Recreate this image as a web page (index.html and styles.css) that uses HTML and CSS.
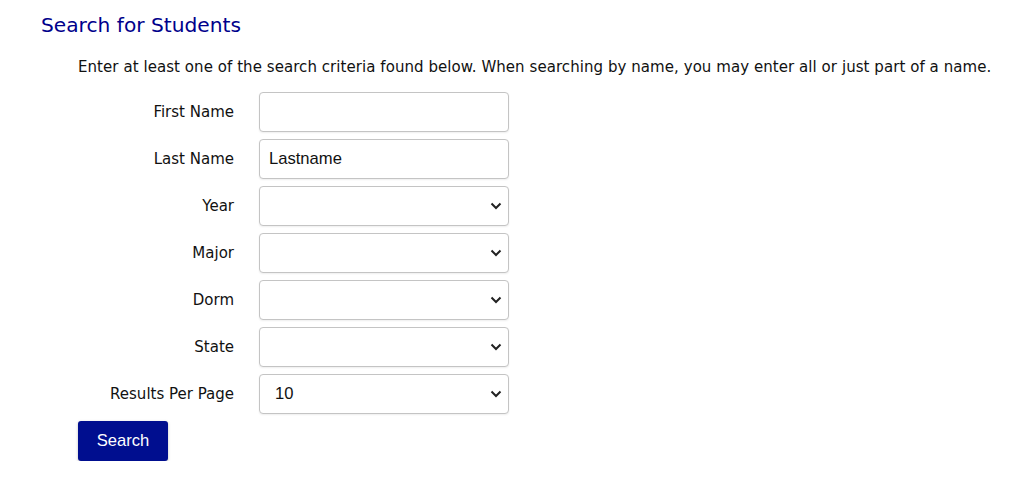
FILE: index.html
```html
<!DOCTYPE html>
<html>
<head>
<meta charset="utf-8">
<link rel="stylesheet" href="styles.css">
</head>
<body>
<div class="page">
  <h1 class="title">Search for Students</h1>
  <p class="intro">Enter at least one of the search criteria found below. When searching by name, you may enter all or just part of a name.</p>
  <form class="form">
    <label class="lbl">First Name</label>
    <input class="field" type="text" value="">
    <label class="lbl">Last Name</label>
    <input class="field" type="text" value="Lastname">
    <label class="lbl">Year</label>
    <div class="sel"><span class="val"></span><svg class="chev" width="12" height="8" viewBox="0 0 12 8"><path d="M1.5 1.5 L6 6 L10.5 1.5" fill="none" stroke="#222" stroke-width="2"/></svg></div>
    <label class="lbl">Major</label>
    <div class="sel"><span class="val"></span><svg class="chev" width="12" height="8" viewBox="0 0 12 8"><path d="M1.5 1.5 L6 6 L10.5 1.5" fill="none" stroke="#222" stroke-width="2"/></svg></div>
    <label class="lbl">Dorm</label>
    <div class="sel"><span class="val"></span><svg class="chev" width="12" height="8" viewBox="0 0 12 8"><path d="M1.5 1.5 L6 6 L10.5 1.5" fill="none" stroke="#222" stroke-width="2"/></svg></div>
    <label class="lbl">State</label>
    <div class="sel"><span class="val"></span><svg class="chev" width="12" height="8" viewBox="0 0 12 8"><path d="M1.5 1.5 L6 6 L10.5 1.5" fill="none" stroke="#222" stroke-width="2"/></svg></div>
    <label class="lbl">Results Per Page</label>
    <div class="sel"><span class="val">10</span><svg class="chev" width="12" height="8" viewBox="0 0 12 8"><path d="M1.5 1.5 L6 6 L10.5 1.5" fill="none" stroke="#222" stroke-width="2"/></svg></div>
  </form>
  <button class="btn" type="button">Search</button>
</div>
</body>
</html>
```
FILE: styles.css
```css
html, body {
  margin: 0;
  padding: 0;
  background: #fff;
}
.page {
  padding: 12px 0 0 41px;
  font-family: "DejaVu Sans", Verdana, sans-serif;
  color: #111;
}
.title {
  margin: 0;
  font-size: 20.2px;
  font-weight: normal;
  color: #00008b;
  line-height: 26px;
}
.intro {
  margin: 19px 0 0 37px;
  font-size: 15px;
  letter-spacing: 0.06px;
  line-height: 20px;
  white-space: nowrap;
}
.form {
  display: grid;
  grid-template-columns: 193px 250px;
  column-gap: 25px;
  row-gap: 7px;
  margin-top: 15px;
  align-items: center;
}
.lbl {
  text-align: right;
  font-size: 15px;
}
.field, .sel {
  box-sizing: border-box;
  width: 250px;
  height: 40px;
  border: 1px solid #c4c4c4;
  border-radius: 4px;
  background: #fff;
  font-family: "Liberation Sans", Arial, sans-serif;
  font-size: 16.6px;
  color: #111;
  padding: 0 10px 0 9px;
  margin: 0;
  outline: none;
  box-shadow: 0 1px 2px rgba(0,0,0,0.07);
}
.sel {
  display: flex;
  align-items: center;
  justify-content: space-between;
  padding: 0 6px 0 15px;
}
.chev {
  display: block;
}
.btn {
  margin: 7px 0 0 37px;
  width: 90px;
  height: 40px;
  border: none;
  border-radius: 3px;
  background: #000e8f;
  color: #fff;
  font-family: "Liberation Sans", Arial, sans-serif;
  font-size: 16.6px;
  box-shadow: 0 1px 3px rgba(0,0,0,0.25);
}
```
